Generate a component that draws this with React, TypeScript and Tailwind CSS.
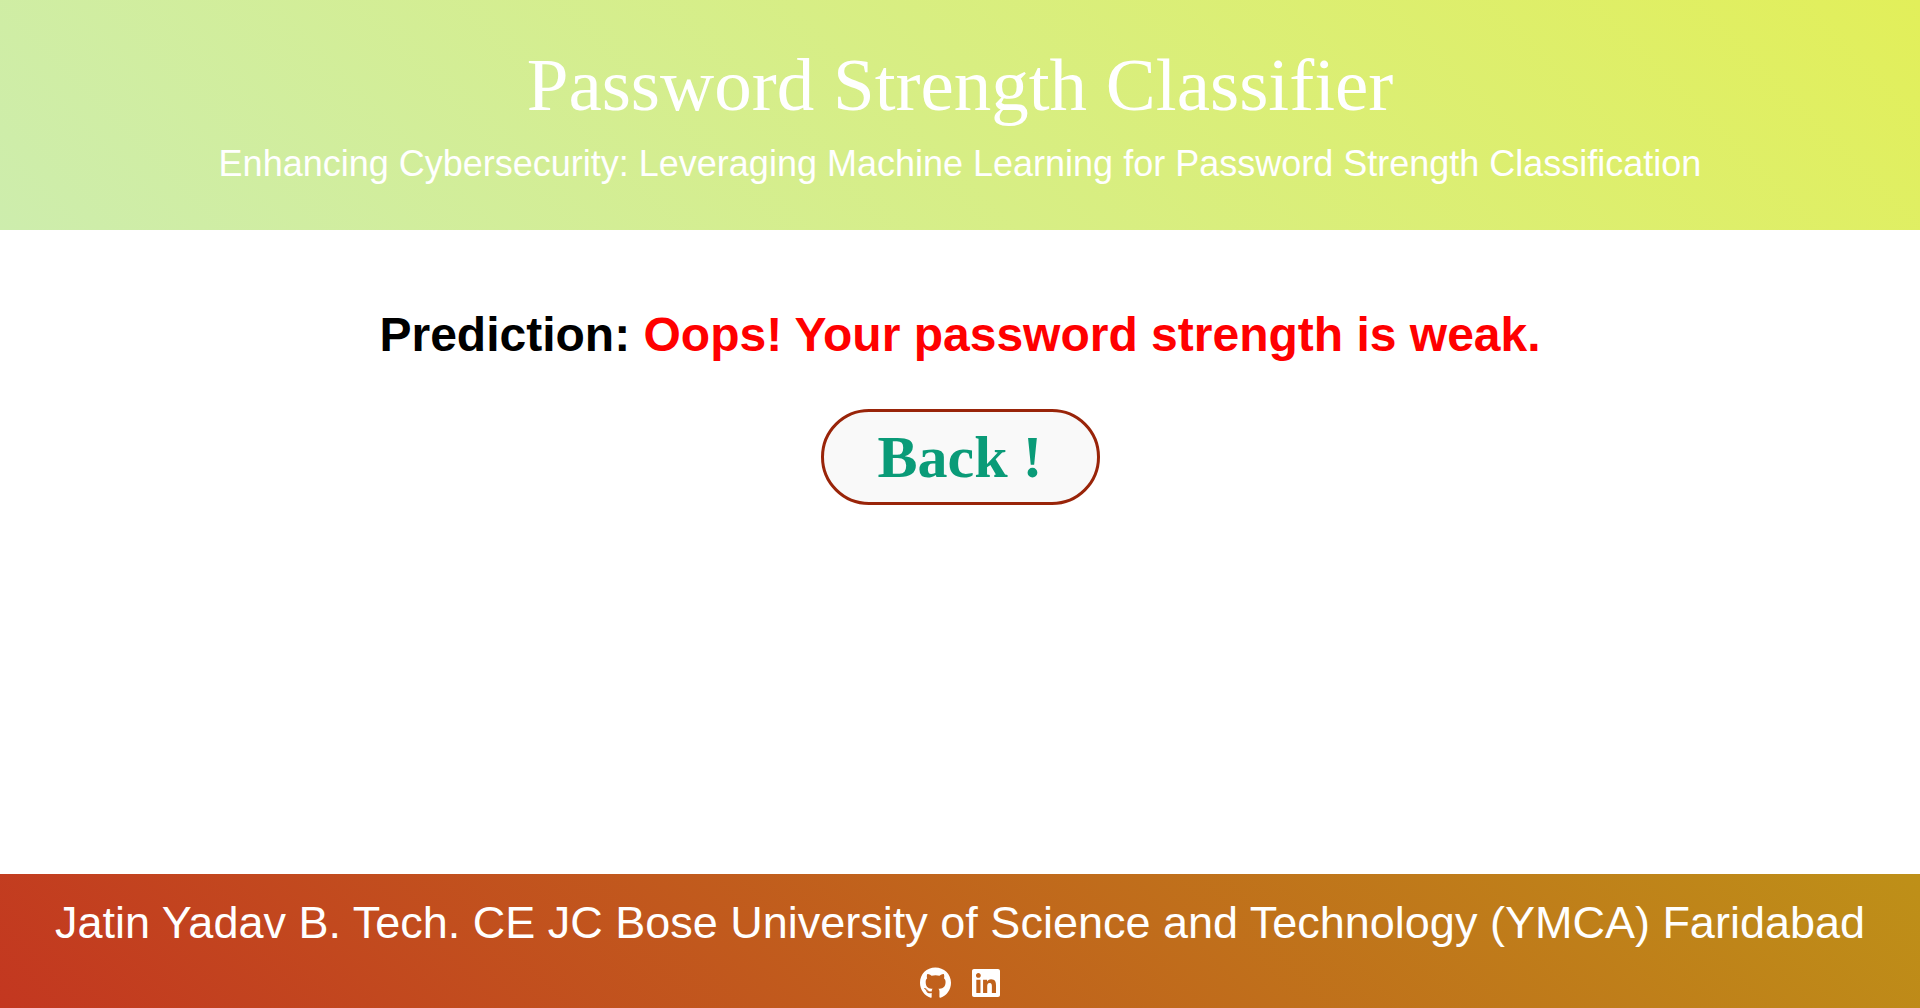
import { FaGithub, FaLinkedin } from 'react-icons/fa';

export default function App() {
  return (
    <div className="flex h-screen flex-col overflow-hidden bg-white font-['Liberation_Sans',Arial,sans-serif]">
      <header className="flex h-[230px] shrink-0 flex-col items-center bg-[linear-gradient(45deg,#cdedad,#e2ef5a)] pt-[42px] text-white">
        <h1 className="whitespace-nowrap font-['Liberation_Serif','Times_New_Roman',serif] text-[75px] leading-[86px]">
          Password Strength Classifier
        </h1>
        <p className="mt-[15px] whitespace-nowrap text-4xl leading-[41px]">
          Enhancing Cybersecurity: Leveraging Machine Learning for Password Strength Classification
        </p>
      </header>

      <main className="flex flex-1 flex-col items-center pt-[77px]">
        <h2 className="whitespace-nowrap text-5xl leading-[55px] font-bold text-black">
          Prediction: <span className="text-[#ff0000]">Oops! Your password strength is weak.</span>
        </h2>
        <button className="mt-[47px] flex h-24 w-[279px] items-center justify-center rounded-[50px] border-3 border-[#992409] bg-[#f9f9f9] font-['Liberation_Serif','Times_New_Roman',serif] text-6xl leading-[69px] font-bold whitespace-nowrap text-[#0a9b78]">
          Back !
        </button>
      </main>

      <footer className="flex h-[134px] shrink-0 flex-col items-center bg-[linear-gradient(45deg,#c33720,#be9018)] pt-[23px] text-white">
        <p className="whitespace-nowrap text-[45px] leading-[52px]">
          Jatin Yadav B. Tech. CE JC Bose University of Science and Technology (YMCA) Faridabad
        </p>
        <div className="mt-[18px] flex gap-[21px]">
          <a href="#" aria-label="GitHub">
            <FaGithub className="h-8 w-[31px]" />
          </a>
          <a href="#" aria-label="LinkedIn">
            <FaLinkedin className="h-8 w-7" />
          </a>
        </div>
      </footer>
    </div>
  );
}
